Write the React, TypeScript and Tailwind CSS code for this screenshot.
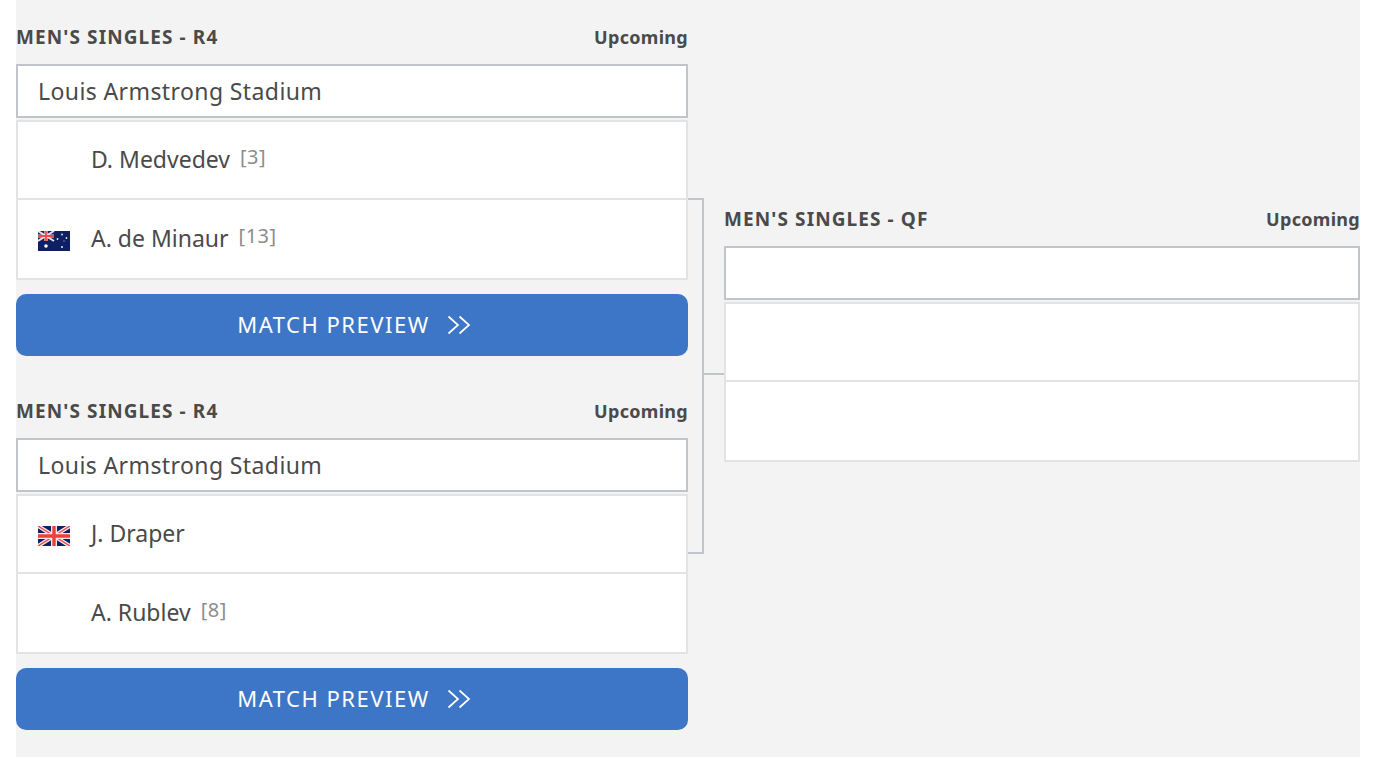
const FONT = "font-['Noto_Sans','Liberation_Sans',sans-serif]";

function AuFlag() {
  return (
    <svg width="32" height="20" viewBox="0 0 32 20" className="shrink-0">
      <rect width="32" height="20" fill="#0f1f63" />
      <path d="M0 0L16 10M16 0L0 10" stroke="#f4dcdc" strokeWidth="2" />
      <path d="M8 0V10M0 5H16" stroke="#f7e3e3" strokeWidth="3.2" />
      <path d="M8 0V10M0 5H16" stroke="#ec4a4a" strokeWidth="1.8" />
      <circle cx="8" cy="15" r="1.8" fill="#fff" />
      <circle cx="24" cy="3.5" r="0.9" fill="#e8ebf5" />
      <circle cx="24" cy="16" r="1" fill="#e8ebf5" />
      <circle cx="19.5" cy="8" r="0.9" fill="#e8ebf5" />
      <circle cx="28.5" cy="7" r="0.9" fill="#e8ebf5" />
      <circle cx="26" cy="10" r="0.6" fill="#e8ebf5" />
    </svg>
  );
}

function GbFlag() {
  return (
    <svg width="32" height="20" viewBox="0 0 32 20" className="shrink-0">
      <rect width="32" height="20" fill="#0f1f63" />
      <path d="M0 0L32 20M32 0L0 20" stroke="#fbe9e9" strokeWidth="4" />
      <path d="M0 0L32 20M32 0L0 20" stroke="#ea4a4a" strokeWidth="1.4" />
      <path d="M16 0V20M0 10H32" stroke="#fbe9e9" strokeWidth="6" />
      <path d="M16 0V20M0 10H32" stroke="#ee3f3a" strokeWidth="3.4" />
    </svg>
  );
}

function Chevrons() {
  return (
    <svg width="24" height="20" viewBox="0 0 24 20" fill="none" stroke="#fff" strokeWidth="1.7" className="shrink-0">
      <path d="M1.5 1.5L11 10L1.5 18.5" />
      <path d="M12.5 1.5L22 10L12.5 18.5" />
    </svg>
  );
}

function Player({ flag, name, seed, className }: { flag?: React.ReactNode; name?: string; seed?: string; className: string }) {
  return (
    <div className={`flex items-center bg-white border-2 border-[#e2e3e4] pl-5 ${className}`}>
      <div className="w-[32px] mr-[21px] flex items-center justify-center translate-y-[2px]">{flag}</div>
      {name && <span className="text-[23px] leading-none text-[#4a4a4a] -translate-y-[1px]">{name}</span>}
      {seed && <span className="ml-[10px] text-[20px] leading-none text-[#8c8c8c] tracking-[0.5px] -translate-y-[3px]">{seed}</span>}
    </div>
  );
}

function Match({ round, venue, a, b, button }: { round: string; venue?: string; a?: any; b?: any; button?: boolean }) {
  return (
    <div className="flex flex-col">
      <div className="h-[36px] flex items-start justify-between text-[#4a4a4a] font-bold leading-[18px]">
        <span className="text-[19px] tracking-[1.1px]">{round}</span>
        <span className="text-[18px] tracking-[0.3px]">Upcoming</span>
      </div>
      <div className="h-[54px] bg-white border-2 border-[#c1c4c8] pl-5 flex items-center text-[23px] leading-none text-[#4a4a4a] tracking-[0.4px]">
        {venue}
      </div>
      <Player className="mt-[2px] h-[80px]" {...a} />
      <Player className="-mt-[2px] h-[82px]" {...b} />
      {button && (
        <div className="mt-[14px] h-[62px] rounded-[10px] bg-[#3e76c7] flex items-center justify-center gap-[17px] pl-[4px] text-white text-[22px] leading-none tracking-[1.5px]">
          <span className="-translate-y-[1px]">MATCH PREVIEW</span>
          <Chevrons />
        </div>
      )}
    </div>
  );
}

export default function App() {
  return (
    <div className={`bg-white h-[758px] overflow-hidden pl-4 pr-[34px] ${FONT}`}>
      <div className="bg-[#f3f3f3] h-[757px] flex pt-[28px]">
        <div className="w-[672px] shrink-0 flex flex-col gap-[46px]">
          <Match round="MEN'S SINGLES - R4" venue="Louis Armstrong Stadium" button
            a={{ name: "D. Medvedev", seed: "[3]" }}
            b={{ flag: <AuFlag />, name: "A. de Minaur", seed: "[13]" }} />
          <Match round="MEN'S SINGLES - R4" venue="Louis Armstrong Stadium" button
            a={{ flag: <GbFlag />, name: "J. Draper" }}
            b={{ name: "A. Rublev", seed: "[8]" }} />
        </div>
        <div className="relative w-[36px] shrink-0">
          <div className="absolute left-0 top-[170px] w-[16px] h-[356px] border-2 border-l-0 border-[#c1c4c8]" />
          <div className="absolute left-[16px] top-[345px] w-[20px] h-[2px] bg-[#c1c4c8]" />
        </div>
        <div className="w-[636px] shrink-0 mt-[182px]">
          <Match round="MEN'S SINGLES - QF" />
        </div>
      </div>
    </div>
  );
}
